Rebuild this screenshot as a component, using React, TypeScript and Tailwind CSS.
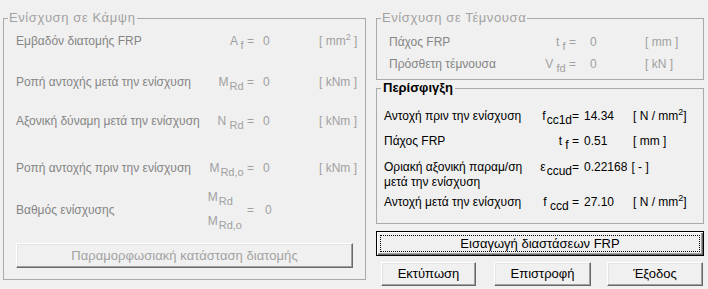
import React from "react";

type C = { children?: React.ReactNode; className?: string };

function Sub({ children, className = "" }: C) {
  return <span className={`relative top-[4px] text-[11px] leading-none ${className}`}>{children}</span>;
}
function SubB({ children, className = "" }: C) {
  return <span className={`relative top-[4px] text-[12px] leading-none ${className}`}>{children}</span>;
}
function Sup({ children }: C) {
  return <span className="relative -top-[5px] text-[9px] leading-none">{children}</span>;
}

const LEGEND = "ml-[4px] px-[1px] text-[13px] leading-[16px] tracking-[0.6px] text-[#a2a2a2] whitespace-nowrap";
const GROUP = "border border-[#a9a9a9] min-w-0";
const LBL = "text-[#858585] whitespace-nowrap";
const DIM = "text-[#a0a0a0] whitespace-nowrap";

function WinButton({ children, className = "" }: C) {
  return (
    <div
      className={`flex items-center justify-center border border-t-white border-l-white border-r-[#696969] border-b-[#696969] shadow-[inset_-1px_-1px_#a0a0a0,inset_1px_1px_#e3e3e3] bg-[#f0f0f0] ${className}`}
    >
      {children}
    </div>
  );
}

export default function App() {
  return (
    <div className="w-[708px] h-[289px] bg-[#f0f0f0] flex pl-[3px] overflow-hidden font-['Liberation_Sans',Arial,sans-serif] text-[12px] leading-[14px] text-black">
      {/* Left group */}
      <fieldset className={`mt-[10px] w-[363px] h-[270px] ${GROUP}`}>
        <legend className={LEGEND}>Ενίσχυση σε Κάμψη</legend>
        <div className="flex flex-col pl-[12px]">
          <div className="flex items-center h-[20px] mt-[5px]">
            <div className={`w-[184px] ${LBL}`}>Εμβαδόν διατομής FRP</div>
            <div className={`w-[54px] text-right ${DIM}`}>
              A <Sub>f</Sub> =
            </div>
            <div className={`ml-[9px] w-[56px] ${DIM}`}>0</div>
            <div className={DIM}>
              [ mm<Sup>2</Sup> ]
            </div>
          </div>
          <div className="flex items-center h-[20px] mt-[21px]">
            <div className={`w-[184px] ${LBL}`}>Ροπή αντοχής μετά την ενίσχυση</div>
            <div className={`w-[54px] text-right ${DIM}`}>
              M<Sub className="ml-[1px]">Rd</Sub> =
            </div>
            <div className={`ml-[9px] w-[56px] ${DIM}`}>0</div>
            <div className={DIM}>[ kNm ]</div>
          </div>
          <div className="flex items-center h-[20px] mt-[19px]">
            <div className={`w-[184px] ${LBL}`}>Αξονική δύναμη μετά την ενίσχυση</div>
            <div className={`w-[54px] text-right ${DIM}`}>
              N <Sub>Rd</Sub> =
            </div>
            <div className={`ml-[9px] w-[56px] ${DIM}`}>0</div>
            <div className={DIM}>[ kNm ]</div>
          </div>
          <div className="flex items-center h-[20px] mt-[27px]">
            <div className={`w-[184px] ${LBL}`}>Ροπή αντοχής πριν την ενίσχυση</div>
            <div className={`w-[54px] text-right ${DIM}`}>
              M<Sub className="ml-[1px]">Rd,o</Sub> =
            </div>
            <div className={`ml-[9px] w-[56px] ${DIM}`}>0</div>
            <div className={DIM}>[ kNm ]</div>
          </div>
          <div className="flex items-center h-[44px] mt-[10px]">
            <div className={`w-[184px] ${LBL}`}>Βαθμός ενίσχυσης</div>
            <div className={`w-[54px] flex items-center justify-end ${DIM}`}>
              <div className="flex flex-col leading-[22px] mr-[5px]">
                <span className="relative -top-[2px]">
                  M<Sub className="ml-[1px]">Rd</Sub>
                </span>
                <span>
                  M<Sub className="ml-[1px]">Rd,o</Sub>
                </span>
              </div>
              <span>=</span>
            </div>
            <div className={`ml-[11px] w-[56px] ${DIM}`}>0</div>
          </div>
          <WinButton className="mt-[11px] w-[337px] h-[25px]">
            <span className="text-[13px] tracking-[0.05px] text-[#a2a2a2] whitespace-nowrap">
              Παραμορφωσιακή κατάσταση διατομής
            </span>
          </WinButton>
        </div>
      </fieldset>

      {/* Right column */}
      <div className="ml-[10px] w-[328px] flex flex-col">
        <fieldset className={`mt-[10px] h-[70px] ${GROUP}`}>
          <legend className={LEGEND}>Ενίσχυση σε Τέμνουσα</legend>
          <div className="flex flex-col pl-[12px]">
            <div className="flex items-center h-[20px] mt-[6px]">
              <div className={`w-[141px] ${LBL}`}>Πάχος FRP</div>
              <div className={`w-[46px] text-right ${DIM}`}>
                t <Sub>f</Sub> =
              </div>
              <div className={`ml-[14px] w-[55px] ${DIM}`}>0</div>
              <div className={DIM}>[ mm ]</div>
            </div>
            <div className="flex items-center h-[20px] mt-[2px]">
              <div className={`w-[141px] ${LBL}`}>Πρόσθετη τέμνουσα</div>
              <div className={`w-[46px] text-right ${DIM}`}>
                V <Sub>fd</Sub> =
              </div>
              <div className={`ml-[14px] w-[55px] ${DIM}`}>0</div>
              <div className={DIM}>[ kN ]</div>
            </div>
          </div>
        </fieldset>

        <fieldset className={`h-[144px] ${GROUP}`}>
          <legend className="ml-[4px] px-[2px] text-[13px] leading-[16px] font-bold text-black whitespace-nowrap">
            Περίσφιγξη
          </legend>
          <div className="flex flex-col pl-[7px]">
            <div className="flex items-center h-[20px] mt-[10px]">
              <div className="w-[153px] whitespace-nowrap">Αντοχή πριν την ενίσχυση</div>
              <div className="w-[42px] text-right whitespace-nowrap">
                f<SubB className="ml-[1px]">cc1d</SubB>=
              </div>
              <div className="ml-[5px] w-[49px]">14.34</div>
              <div className="whitespace-nowrap">
                [ N / mm<Sup>2</Sup>]
              </div>
            </div>
            <div className="flex items-center h-[20px] mt-[5px]">
              <div className="w-[153px] whitespace-nowrap">Πάχος FRP</div>
              <div className="w-[42px] text-right whitespace-nowrap">
                t <SubB>f</SubB> =
              </div>
              <div className="ml-[5px] w-[49px]">0.51</div>
              <div className="whitespace-nowrap">[ mm ]</div>
            </div>
            <div className="flex items-start mt-[9px]">
              <div className="w-[153px] leading-[15px] whitespace-nowrap">
                Οριακή αξονική παραμ/ση
                <br />
                μετά την ενίσχυση
              </div>
              <div className="w-[42px] text-right leading-[15px] whitespace-nowrap">
                ε<SubB className="ml-[1px]">ccud</SubB>=
              </div>
              <div className="ml-[5px] leading-[15px] whitespace-nowrap">0.22168</div>
              <div className="ml-[4px] leading-[15px] whitespace-nowrap">[ - ]</div>
            </div>
            <div className="flex items-center h-[20px] mt-[2px]">
              <div className="w-[153px] whitespace-nowrap">Αντοχή μετά την ενίσχυση</div>
              <div className="w-[42px] text-right whitespace-nowrap">
                f <SubB>ccd</SubB> =
              </div>
              <div className="ml-[5px] w-[49px]">27.10</div>
              <div className="whitespace-nowrap">
                [ N / mm<Sup>2</Sup>]
              </div>
            </div>
          </div>
        </fieldset>

        <div className="mt-[7px] h-[25px] border border-black bg-[#f0f0f0] shadow-[inset_1px_1px_#ffffff,inset_-1px_-1px_#696969,inset_-2px_-2px_#a0a0a0] p-[3px]">
          <div className="h-full border border-dotted border-black flex items-center justify-center">
            <span className="text-[13px] whitespace-nowrap">Εισαγωγή διαστάσεων FRP</span>
          </div>
        </div>

        <div className="mt-[6px] flex">
          <WinButton className="ml-[5px] w-[95px] h-[24px]">
            <span className="text-[13px]">Εκτύπωση</span>
          </WinButton>
          <WinButton className="ml-[18px] w-[97px] h-[24px]">
            <span className="text-[13px]">Επιστροφή</span>
          </WinButton>
          <WinButton className="ml-[16px] w-[96px] h-[24px]">
            <span className="text-[13px]">Έξοδος</span>
          </WinButton>
        </div>
      </div>
    </div>
  );
}
